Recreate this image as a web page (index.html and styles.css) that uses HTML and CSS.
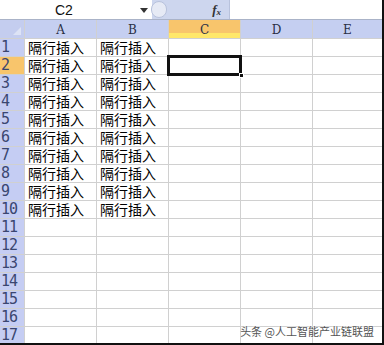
FILE: index.html
```html
<!DOCTYPE html>
<html>
<head>
<meta charset="utf-8">
<link rel="stylesheet" href="styles.css">
</head>
<body>
<div class="app">
  <div class="fbar">
    <div class="namebox"><span class="ref">C2</span><span class="arrow"></span></div>
    <div class="mid"><span class="pill"></span><span class="fx">f<sub>x</sub></span></div>
    <div class="formula"></div>
  </div>
  <div class="sheet">
    <div class="corner"><span class="tri"></span></div>
    <div class="ch">A</div><div class="ch">B</div><div class="ch csel">C</div><div class="ch">D</div><div class="ch">E</div>

    <div class="rh">1</div><div class="c">隔行插入</div><div class="c">隔行插入</div><div class="c"></div><div class="c"></div><div class="c"></div>
    <div class="rh rsel">2</div><div class="c">隔行插入</div><div class="c">隔行插入</div><div class="c sel"><span class="handle"></span></div><div class="c"></div><div class="c"></div>
    <div class="rh">3</div><div class="c">隔行插入</div><div class="c">隔行插入</div><div class="c"></div><div class="c"></div><div class="c"></div>
    <div class="rh">4</div><div class="c">隔行插入</div><div class="c">隔行插入</div><div class="c"></div><div class="c"></div><div class="c"></div>
    <div class="rh">5</div><div class="c">隔行插入</div><div class="c">隔行插入</div><div class="c"></div><div class="c"></div><div class="c"></div>
    <div class="rh">6</div><div class="c">隔行插入</div><div class="c">隔行插入</div><div class="c"></div><div class="c"></div><div class="c"></div>
    <div class="rh">7</div><div class="c">隔行插入</div><div class="c">隔行插入</div><div class="c"></div><div class="c"></div><div class="c"></div>
    <div class="rh">8</div><div class="c">隔行插入</div><div class="c">隔行插入</div><div class="c"></div><div class="c"></div><div class="c"></div>
    <div class="rh">9</div><div class="c">隔行插入</div><div class="c">隔行插入</div><div class="c"></div><div class="c"></div><div class="c"></div>
    <div class="rh">10</div><div class="c">隔行插入</div><div class="c">隔行插入</div><div class="c"></div><div class="c"></div><div class="c"></div>
    <div class="rh">11</div><div class="c"></div><div class="c"></div><div class="c"></div><div class="c"></div><div class="c"></div>
    <div class="rh">12</div><div class="c"></div><div class="c"></div><div class="c"></div><div class="c"></div><div class="c"></div>
    <div class="rh">13</div><div class="c"></div><div class="c"></div><div class="c"></div><div class="c"></div><div class="c"></div>
    <div class="rh">14</div><div class="c"></div><div class="c"></div><div class="c"></div><div class="c"></div><div class="c"></div>
    <div class="rh">15</div><div class="c"></div><div class="c"></div><div class="c"></div><div class="c"></div><div class="c"></div>
    <div class="rh">16</div><div class="c"></div><div class="c"></div><div class="c"></div><div class="c"></div><div class="c"></div>
    <div class="rh">17</div><div class="c"></div><div class="c"></div><div class="c"></div><div class="c"></div><div class="c"></div>
  </div>
  <div class="wm">头条 @人工智能产业链联盟</div>
</div>
</body>
</html>
```
FILE: styles.css
```css
* { box-sizing: border-box; }
html, body { margin: 0; padding: 0; background: #fff; }
.app {
  position: relative;
  width: 384px;
  height: 345px;
  overflow: hidden;
  border-right: 2px solid #111;
  border-bottom: 2px solid #111;
  font-family: "Noto Sans CJK SC", sans-serif;
}
.fbar {
  display: flex;
  height: 20px;
  border-bottom: 1px solid #aab3c8;
  background: #fff;
}
.namebox {
  width: 152px;
  display: flex;
  align-items: center;
  position: relative;
  background: #fff;
}
.ref {
  margin-left: 55px;
  font-family: "Liberation Sans", Arial, sans-serif;
  font-size: 14px;
  color: #111;
}
.arrow {
  position: absolute;
  left: 140px;
  top: 8px;
  width: 0; height: 0;
  border-left: 4px solid transparent;
  border-right: 4px solid transparent;
  border-top: 5px solid #333;
}
.mid {
  width: 77px;
  display: flex;
  align-items: center;
  background: #cdd6ee;
  position: relative;
}
.pill {
  width: 16px;
  height: 17px;
  margin-left: -1px;
  border-radius: 9px;
  background: #e6eaf5;
  border: 1px solid #b8c2dc;
}
.fx {
  margin-left: auto;
  margin-right: 8px;
  font-family: "Liberation Serif", serif;
  font-style: italic;
  font-weight: bold;
  font-size: 13px;
  color: #333;
  line-height: 1;
}
.fx sub { font-size: 9px; vertical-align: -1px; }
.formula {
  flex: 1;
  background: #fff;
  border-left: 1px solid #b8c2dc;
}
.sheet {
  display: grid;
  grid-template-columns: 24px 71px 71px 71px 71px 1fr;
  grid-template-rows: 18px repeat(17, 17px);
  gap: 1px;
  background: #d0d0d0;
  border-bottom: 1px solid #d0d0d0;
}
.corner {
  background: #c4cdef;
  position: relative;
}
.tri {
  position: absolute;
  right: 3px; bottom: 3px;
  width: 0; height: 0;
  border-left: 8px solid transparent;
  border-bottom: 8px solid #dde3f5;
}
.ch {
  background: #c5cff1;
  display: flex;
  align-items: center;
  justify-content: center;
  font-family: "DejaVu Serif", "Liberation Serif", serif;
  font-size: 12px;
  color: #2a2f45;
  padding-top: 1px;
}
.ch.csel {
  background: linear-gradient(#f8c56c 0 72%, #ffe76a 72% 100%);
}
.rh {
  background: #c5cdf3;
  display: flex;
  align-items: center;
  padding-left: 1px;
  font-family: "DejaVu Sans Mono", "Liberation Mono", monospace;
  font-size: 15px;
  letter-spacing: -1px;
  color: #3a4670;
  line-height: 1;
  overflow: hidden;
}
.rh.rsel { background: #f8c56c; }
.c {
  background: #fff;
  font-size: 14px;
  line-height: 17px;
  height: 17px;
  padding-left: 3px;
  color: #000;
  white-space: nowrap;
  position: relative;
}
.c.sel {
  box-shadow: 0 0 0 2px #111, inset 0 0 0 1px #111;
  z-index: 2;
}
.handle {
  position: absolute;
  right: -4px;
  bottom: -4px;
  width: 5px;
  height: 5px;
  background: #111;
  border: 1px solid #fff;
}
.wm {
  position: absolute;
  right: 8px;
  bottom: 5px;
  font-size: 11px;
  line-height: 14px;
  color: #555;
  text-shadow: 0 0 2px #fff, 0 0 2px #fff;
}
```
